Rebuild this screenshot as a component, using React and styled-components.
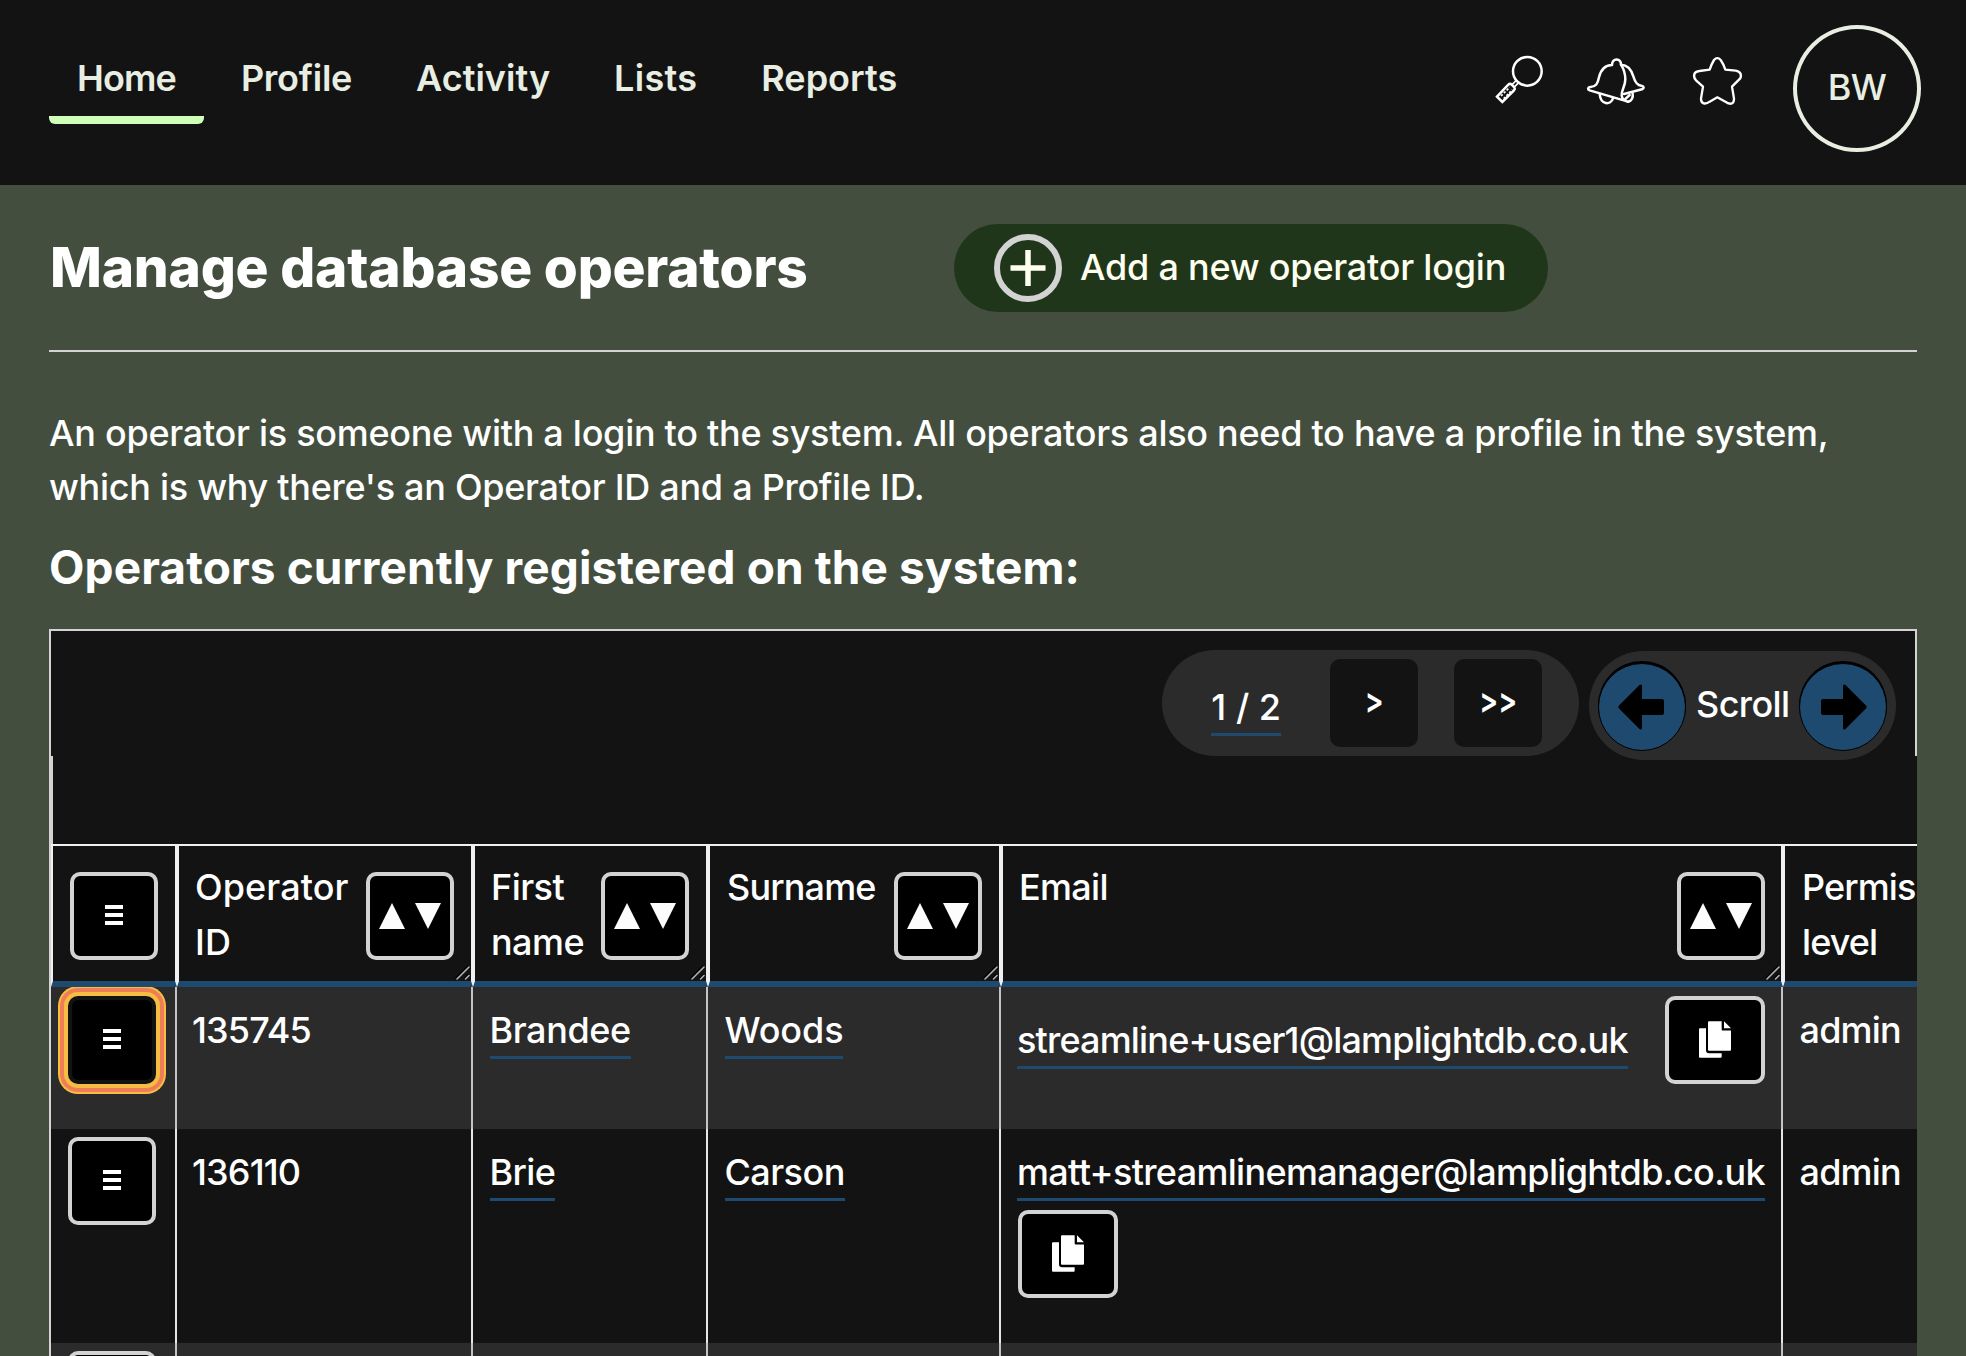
import React from "react";
import styled, { createGlobalStyle, css } from "styled-components";

const GlobalStyle = createGlobalStyle`
  *, *::before, *::after { box-sizing: border-box; }
  body {
    margin: 0;
    background: #434e3e;
    color: #fff;
    font: 450 36px/54px Inter, "Liberation Sans", sans-serif;
  }
  button { font: inherit; color: inherit; padding: 0; }
  svg { display: block; overflow: visible; }
`;

const Page = styled.div`
  height: 100vh;
  overflow: hidden;
`;

const TopBar = styled.header`
  display: flex;
  justify-content: space-between;
  align-items: flex-start;
  height: 185px;
  padding: 25px 45px 0 49px;
  background: #131313;
  color: #e8eee2;
`;

const Nav = styled.nav`
  display: flex;
  gap: 8px;
  padding-top: 26px;
`;

const NavItem = styled.a`
  padding: 0 28px;
  font-weight: 600;
  letter-spacing: ${(p) => p.$tracking || 0}px;
  ${(p) =>
    p.$active &&
    css`
      margin-right: 1px;
      &::after {
        content: "";
        display: block;
        height: 8px;
        margin: 11px -28px 0;
        border-radius: 0 0 6px 6px;
        background: #cfffb9;
      }
    `}
`;

const Actions = styled.div`
  display: flex;
  align-items: flex-start;
`;

const IconLink = styled.a`
  display: flex;
  margin: ${(p) => p.$top}px ${(p) => p.$gap}px 0 0;
`;

const Avatar = styled.div`
  display: grid;
  place-items: center;
  width: 128px;
  height: 127px;
  border: 4px solid #e8eee2;
  border-radius: 50%;
  padding-bottom: 4px;
  letter-spacing: -0.6px;
`;

const Content = styled.main`
  padding: 39px 49px 0;
`;

const TitleRow = styled.div`
  display: flex;
  align-items: center;
  padding-bottom: 38px;
  border-bottom: 2px solid #d3d3d3;
`;

const Title = styled.h1`
  width: 905px;
  margin: 0;
  padding: 0 0 2px 1px;
  font-size: 55px;
  font-weight: 850;
  letter-spacing: -0.22px;
`;

const AddButton = styled.button`
  display: flex;
  align-items: center;
  gap: 18px;
  width: 594px;
  height: 88px;
  padding: 0 0 0 40px;
  border: 0;
  border-radius: 44px;
  background: #20361b;
  color: #fffff0;
  letter-spacing: -0.22px;
`;

const AddLabel = styled.span`
  padding-bottom: 2px;
`;

const PlusRing = styled.span`
  display: grid;
  place-items: center;
  width: 68px;
  height: 68px;
  margin-top: -1px;
  border: 6px solid #d3d3d3;
  border-radius: 50%;
`;

const Intro = styled.p`
  margin: 53.5px 0 0;
  letter-spacing: -0.28px;
`;

const SubTitle = styled.h2`
  margin: 23.5px 0 32px;
  font-size: 46px;
  font-weight: 700;
  line-height: 60px;
  letter-spacing: 0.1px;
`;

const Toolbar = styled.div`
  position: relative;
  z-index: 1;
  display: flex;
  justify-content: flex-end;
  align-items: flex-start;
  gap: 10px;
  height: 127px;
  padding: 19px 19px 0 0;
  border: 2px solid #d3d3d3;
  border-bottom: 0;
  background: #131313;
`;

const Pager = styled.div`
  display: flex;
  align-items: center;
  height: 106px;
  padding: 0 37px 0 49px;
  border-radius: 53px;
  background: #2b2b2b;
`;

const Link = styled.a`
  padding-bottom: 4px;
  border-bottom: 3px solid #1d4a6e;
  letter-spacing: ${(p) => p.$tracking || 0}px;
`;

const PageCount = styled.div`
  padding-top: 7px;
  margin-right: 49px;
`;

const PageButton = styled.button`
  width: 88px;
  height: 88px;
  border: 0;
  border-radius: 10px;
  background: #131313;
  font-weight: 600;

  & + & { margin-left: 36px; }

  span {
    display: inline-block;
    padding-bottom: 6px;
    transform: scaleX(0.78);
  }
`;

const Scroller = styled.div`
  display: flex;
  align-items: center;
  height: 109px;
  margin-top: 1px;
  padding: 2px 9px 0;
  gap: 9px;
  border-radius: 54.5px;
  background: #2b2b2b;
`;

const ScrollLabel = styled.span`
  width: 95px;
  padding: 0 0 5px 1px;
  letter-spacing: -0.6px;
`;

const RoundButton = styled.button`
  display: grid;
  place-items: center;
  width: 88px;
  height: 88px;
  border: 1.5px solid #000;
  border-radius: 50%;
  background: #1d4a6e;
  box-shadow: 0 -2px 0 #000;
  padding: ${(p) => (p.$forward ? "0 0 0 2px" : "0 2px 0 0")};
`;

const TableFrame = styled.div`
  overflow: hidden;
  border-left: 2px solid #d3d3d3;
  background: #131313;
`;

const Spacer = styled.div`
  height: 88px;
  border-left: 2px solid #d3d3d3;
`;

const columns = css`
  display: grid;
  grid-template-columns: 126px 296px 235px 293px 782px 360px;
`;

const HeadRow = styled.div`
  ${columns}
  position: relative;
  z-index: 1;
  width: 2092px;
  height: 143px;
`;

const HeadCell = styled.div`
  position: relative;
  display: flex;
  justify-content: space-between;
  align-items: flex-start;
  padding: 14px ${(p) => p.$end || 17}px 0 ${(p) => p.$start || 16}px;
  border: 2px solid #f0f0f0;
  border-bottom: 6px solid #1d4a6e;
  background: #131313;
  line-height: 55px;
  letter-spacing: ${(p) => p.$tracking || 0}px;
`;

const Grip = styled.svg`
  position: absolute;
  right: 1px;
  bottom: 1px;
`;

const SquareButton = styled.button`
  display: grid;
  place-items: center;
  flex: none;
  width: ${(p) => (p.$wide ? 100 : 88)}px;
  height: 88px;
  padding-bottom: ${(p) => (p.$wide ? 2 : 0)}px;
  border: 4px solid #d3d3d3;
  border-radius: 10px;
  background: #000;
  ${(p) =>
    p.$focused &&
    css`
      border-color: #131313;
      box-shadow: 0 0 0 4px #f5bd41, 0 0 0 8px #ef7e56, 0 0 0 10px #f5bd41;
    `}
`;

const HeadButton = styled(SquareButton)`
  margin-top: 12px;
  margin-left: ${(p) => (p.$menu ? 1 : 0)}px;
`;

const Row = styled.div`
  ${columns}
  width: 2092px;
  height: ${(p) => p.$height}px;
  background: ${(p) => (p.$shaded ? "#2b2b2b" : "#131313")};
  --line: ${(p) => (p.$shaded ? "#c4c4c4" : "#e6e6e6")};
`;

const Cell = styled.div`
  padding: 16px 15px 0 16.5px;
  border-right: 2px solid var(--line);
  letter-spacing: ${(p) => p.$tracking || 0}px;
`;

const IdCell = styled(Cell)`
  padding-left: 15px;
  letter-spacing: -0.85px;
`;

const MenuCell = styled(Cell)`
  padding-left: 17px;
  padding-top: ${(p) => p.$top || 8}px;
`;

const EmailCell = styled(Cell)`
  display: flex;
  justify-content: space-between;
  align-items: flex-start;
  padding-left: 16px;
  padding-right: 16px;
  ${(p) =>
    p.$stacked
      ? css`
          flex-direction: column;
          justify-content: flex-start;
          gap: 11px;
        `
      : css`
          padding-top: 9px;
        `}
`;

const InlineEmail = styled.div`
  padding-top: ${(p) => p.$top || 0}px;
`;

const CopyButton = styled(SquareButton)`
  margin-left: ${(p) => (p.$indent ? 1 : 0)}px;
`;

const Bars = styled.span`
  width: 18px;
  height: 20px;
  margin-top: -2px;
  background: repeating-linear-gradient(#fff 0 4px, transparent 4px 8px);
`;

const SearchIcon = () => (
  <svg width="47" height="47" viewBox="36 37 141 141" fill="none" stroke="#fff" strokeWidth="7.5">
    <circle cx="130" cy="83" r="43" />
    <path d="M98 109 L85 122 M105 116 L92 129" strokeWidth="5" />
    <path d="M39 159 L73 123 Q78 118 83 123 L91 131 Q94 135 90 140 L55 175 Z" />
    <path d="M51 157 L77 131" strokeWidth="5" strokeDasharray="7 5" />
    <path d="M59 165 L85 138" strokeWidth="5" strokeDasharray="7 5" />
  </svg>
);

const BellIcon = () => (
  <svg
    width="58"
    height="47"
    viewBox="309 42 174 141"
    fill="none"
    stroke="#fff"
    strokeWidth="7.5"
    strokeLinejoin="round"
    strokeLinecap="round"
  >
    <path d="M384 63 C384 42 411 40 411 62 C416 70 424 84 424 106 C424 128 411 140 413 155 C414 164 421 171 432 173 L317 139 C310 136 311 130 319 129 C336 128 341 120 345 100 C350 78 362 64 384 63" />
    <path d="M411 62 C432 63 442 76 448 97 C454 117 460 124 472 125 C481 127 481 133 474 136 L420 150" />
    <path d="M347 150 C350 184 380 184 387 163" />
    <path d="M432 173 C443 171 448 160 446 149" />
    <path d="M424 165 L437 153" />
  </svg>
);

const StarIcon = () => (
  <svg
    width="49"
    height="48"
    viewBox="626 40 147 144"
    fill="none"
    stroke="#fff"
    strokeWidth="7"
    strokeLinejoin="round"
  >
    <path d="M689 49 Q699 38 709 49 Q717 60 723 78 L754 81 Q766 83 769 91 Q772 101 764 108 L743 129 L749 165 Q749 178 740 180 Q731 181 723 174 L699 161 L676 174 Q667 181 658 179 Q650 176 650 165 L656 129 L635 110 Q627 101 630 91 Q633 83 645 82 L676 78 Q682 60 689 49 Z" />
  </svg>
);

const PlusIcon = () => (
  <svg width="36" height="36" viewBox="0 0 36 36" stroke="#fffff0" strokeWidth="5.5">
    <path d="M18 0V36M0.5 18H35.5" />
  </svg>
);

const ArrowIcon = ({ flip }) => (
  <svg width="46" height="46" viewBox="0 0 46 46">
    <g transform={flip ? "translate(46 0) scale(-1 1)" : undefined}>
      <path d="M1 21.5 L21.5 1 Q24 -0.5 24 2.5 V15 H44 Q46 15 46 17 V29 Q46 31 44 31 H24 V43.500 Q24 46.500 21.500 45 L1 24.500 Q-0.500 23 1 21.500 Z" />
    </g>
  </svg>
);

const SortIcon = () => (
  <svg width="62" height="26" viewBox="0 0 62 26" fill="#fcfcfc">
    <path d="M13 0 L26 26 H0 Z M36 0 H62 L49 26 Z" />
  </svg>
);

const CopyIcon = () => (
  <svg width="32" height="37" viewBox="147 213 96 110" fill="#fff">
    <path d="M177 213 H215 V238 Q215 241 218 241 H243 V299 Q243 302 240 302 H177 Q174 302 174 299 V216 Q174 213 177 213 Z" />
    <path d="M222 213 L243 234 H222 Z" />
    <path d="M150 234 H168 V300 Q168 309 177 309 H215 V320 Q215 323 212 323 H150 Q147 323 147 320 V237 Q147 234 150 234 Z" />
  </svg>
);

const ResizeGrip = () => (
  <Grip width="14" height="14" viewBox="0 0 14 14" fill="none" strokeLinecap="round">
    <path d="M0 12 L12 0 M8.500 12 L12 8.500" stroke="#000" strokeWidth="1.500" />
    <path d="M1 13 L13 1 M9.500 13 L13 9.500" stroke="#b0b0b0" strokeWidth="1.600" />
  </Grip>
);

const headings = [
  { label: "Operator ID", tracking: 0.1 },
  { label: "First name", tracking: -0.55 },
  { label: "Surname", tracking: -0.85, start: 17 },
  { label: "Email", tracking: -0.7, end: 16 },
  { label: "Permission level", tracking: -0.9, start: 17 },
];

const rows = [
  {
    id: "135745",
    first: ["Brandee", -0.4],
    last: ["Woods", -0.1],
    email: ["streamline+user1@lamplightdb.co.uk", -0.82],
    level: "admin",
    height: 142,
    focused: true,
  },
  {
    id: "136110",
    first: ["Brie", -0.65],
    last: ["Carson", -0.55],
    email: ["matt+streamlinemanager@lamplightdb.co.uk", -0.67],
    level: "admin",
    height: 214,
    stacked: true,
  },
];

export default function App() {
  return (
    <Page>
      <GlobalStyle />
      <TopBar>
        <Nav>
          <NavItem $active $tracking={-0.9}>Home</NavItem>
          <NavItem $tracking={-0.25}>Profile</NavItem>
          <NavItem>Activity</NavItem>
          <NavItem $tracking={0.3}>Lists</NavItem>
          <NavItem>Reports</NavItem>
        </Nav>
        <Actions>
          <IconLink $top={31} $gap={44}><SearchIcon /></IconLink>
          <IconLink $top={33} $gap={48}><BellIcon /></IconLink>
          <IconLink $top={32} $gap={51}><StarIcon /></IconLink>
          <Avatar>BW</Avatar>
        </Actions>
      </TopBar>
      <Content>
        <TitleRow>
          <Title>Manage database operators</Title>
          <AddButton>
            <PlusRing><PlusIcon /></PlusRing>
            <AddLabel>Add a new operator login</AddLabel>
          </AddButton>
        </TitleRow>
        <Intro>
          An operator is someone with a login to the system. All operators also need to have a
          profile in the system, which is why there's an Operator ID and a Profile ID.
        </Intro>
        <SubTitle>Operators currently registered on the system:</SubTitle>
        <Toolbar>
          <Pager>
            <PageCount><Link>1 / 2</Link></PageCount>
            <PageButton><span>&gt;</span></PageButton>
            <PageButton><span>&gt;&gt;</span></PageButton>
          </Pager>
          <Scroller>
            <RoundButton><ArrowIcon /></RoundButton>
            <ScrollLabel>Scroll</ScrollLabel>
            <RoundButton $forward><ArrowIcon flip /></RoundButton>
          </Scroller>
        </Toolbar>
        <TableFrame>
          <Spacer />
          <HeadRow>
            <HeadCell>
              <HeadButton $menu><Bars /></HeadButton>
            </HeadCell>
            {headings.map((h) => (
              <HeadCell key={h.label} $tracking={h.tracking} $start={h.start} $end={h.end}>
                {h.label}
                <HeadButton><SortIcon /></HeadButton>
                <ResizeGrip />
              </HeadCell>
            ))}
          </HeadRow>
          {rows.map((r, i) => (
            <Row key={r.id} $height={r.height} $shaded={i % 2 === 0}>
              <MenuCell $top={r.focused ? 9 : 8}>
                <SquareButton $focused={r.focused}><Bars /></SquareButton>
              </MenuCell>
              <IdCell>{r.id}</IdCell>
              <Cell><Link $tracking={r.first[1]}>{r.first[0]}</Link></Cell>
              <Cell><Link $tracking={r.last[1]}>{r.last[0]}</Link></Cell>
              <EmailCell $stacked={r.stacked}>
                <InlineEmail $top={r.stacked ? 0 : 17}>
                  <Link $tracking={r.email[1]}>{r.email[0]}</Link>
                </InlineEmail>
                <CopyButton $wide $indent={r.stacked}><CopyIcon /></CopyButton>
              </EmailCell>
              <Cell $tracking={-0.8}>{r.level}</Cell>
            </Row>
          ))}
          <Row $height={142} $shaded>
            <MenuCell><SquareButton><Bars /></SquareButton></MenuCell>
            <Cell />
            <Cell />
            <Cell />
            <Cell />
            <Cell />
          </Row>
        </TableFrame>
      </Content>
    </Page>
  );
}
